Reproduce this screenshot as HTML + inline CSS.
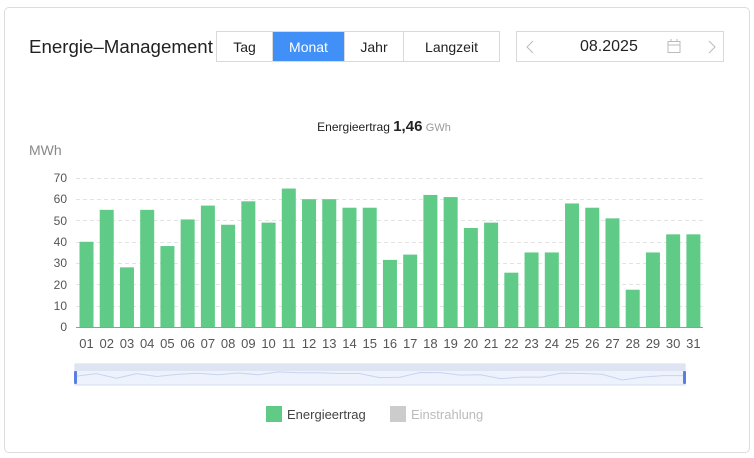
<!DOCTYPE html><html><head><meta charset="utf-8"><style>
body{margin:0;width:754px;height:458px;background:#fff;font-family:"Liberation Sans",sans-serif;overflow:hidden;position:relative}
.card{position:absolute;left:4px;top:7px;width:744px;height:444px;border:1px solid #dcdcdc;border-radius:5px}
.t{position:absolute;left:29px;top:36px;font-size:18.7px;color:#222}
.seg{position:absolute;left:216px;top:31px;height:31px;border:1px solid #d9d9d9;display:flex;font-size:14px;color:#222;box-sizing:border-box}
.seg div{display:flex;align-items:center;justify-content:center;border-right:1px solid #d9d9d9;box-sizing:border-box}
.seg div:last-child{border:none}
.dp{position:absolute;left:516px;top:31px;width:208px;height:31px;border:1px solid #d9d9d9;box-sizing:border-box;font-size:16px;color:#222}
</style></head><body>
<div class="card"></div>
<div class="t">Energie–Management</div>
<div class="seg"><div style="width:56px">Tag</div><div style="width:72px;background:#4090f7;color:#fff">Monat</div><div style="width:59px">Jahr</div><div style="width:95px">Langzeit</div></div>
<div class="dp"><svg style="position:absolute;left:9px;top:8px" width="8" height="14"><path d="M7 1 L1 7 L7 13" fill="none" stroke="#bbb"/></svg><span style="position:absolute;left:63px;top:6px">08.2025</span>
<svg style="position:absolute;left:150px;top:7px" width="14" height="15"><rect x="1" y="2.5" width="12" height="11" fill="none" stroke="#bbb"/><line x1="1" y1="6" x2="13" y2="6" stroke="#bbb"/><line x1="4" y1="0" x2="4" y2="3" stroke="#bbb"/><line x1="10" y1="0" x2="10" y2="3" stroke="#bbb"/></svg>
<svg style="position:absolute;left:191px;top:8px" width="8" height="14"><path d="M1 1 L7 7 L1 13" fill="none" stroke="#bbb"/></svg></div>
<div style="position:absolute;left:0;width:754px;top:118px;text-align:center;font-size:12px;color:#222;padding-left:14px;box-sizing:border-box">Energieertrag <b style="font-size:15px">1,46</b> <span style="color:#999;font-size:11px">GWh</span></div>
<div style="position:absolute;left:29px;top:142px;font-size:14px;color:#888">MWh</div>
<svg style="position:absolute;left:0;top:0" width="754" height="458" font-family="Liberation Sans" font-size="12" fill="#555">
<g stroke="#e3e3e3" stroke-dasharray="4,3">
<line x1="76" x2="703" y1="178.5" y2="178.5"/><line x1="76" x2="703" y1="199.5" y2="199.5"/><line x1="76" x2="703" y1="220.5" y2="220.5"/><line x1="76" x2="703" y1="242.5" y2="242.5"/><line x1="76" x2="703" y1="263.5" y2="263.5"/><line x1="76" x2="703" y1="284.5" y2="284.5"/><line x1="76" x2="703" y1="306.5" y2="306.5"/></g>
<line x1="76" x2="703" y1="327.5" y2="327.5" stroke="#999"/>
<g text-anchor="end"><text x="67" y="182">70</text><text x="67" y="203">60</text><text x="67" y="225">50</text><text x="67" y="246">40</text><text x="67" y="267">30</text><text x="67" y="289">20</text><text x="67" y="310">10</text><text x="67" y="331">0</text></g>
<g id="b" fill="#5fcb86"></g>
<g id="l" text-anchor="middle" font-size="13"></g>
<rect x="75" y="364" width="610" height="21" fill="#eef2fc" stroke="#d5dbee"/>
<rect x="75" y="364" width="610" height="7" fill="#dfe4f3"/>
<polyline id="p" fill="none" stroke="#c8d3f0"/>
<rect x="74" y="371" width="3" height="13" rx="1" fill="#5b7fe0"/><rect x="683" y="371" width="3" height="13" rx="1" fill="#5b7fe0"/>
<rect x="266" y="406" width="16" height="16" fill="#5fcb86"/><text x="287" y="419" font-size="13" fill="#444">Energieertrag</text>
<rect x="390" y="406" width="16" height="16" fill="#ccc"/><text x="411" y="419" font-size="13" fill="#bbb">Einstrahlung</text>
</svg>
<script>
var v=[40,55,28,55,38,50.5,57,48,59,49,65,60,60,56,56,31.5,34,62,61,46.5,49,25.5,35,35,58,56,51,17.5,35,43.5,43.5];
var b=document.getElementById('b'),l=document.getElementById('l'),ns='http://www.w3.org/2000/svg',pts=[];
v.forEach(function(x,i){var c=79.5+i*20.23+7;var h=x*2.13;var r=document.createElementNS(ns,'rect');r.setAttribute('x',c-7);r.setAttribute('width',14);r.setAttribute('y',327-h);r.setAttribute('height',h);b.appendChild(r);
var t=document.createElementNS(ns,'text');t.setAttribute('x',c);t.setAttribute('y',348);t.textContent=(i<9?'0':'')+(i+1);l.appendChild(t);
pts.push((76+i*607/30).toFixed(1)+','+(383-x*0.17).toFixed(1));});
document.getElementById('p').setAttribute('points',pts.join(' '));
</script>
</body></html>
